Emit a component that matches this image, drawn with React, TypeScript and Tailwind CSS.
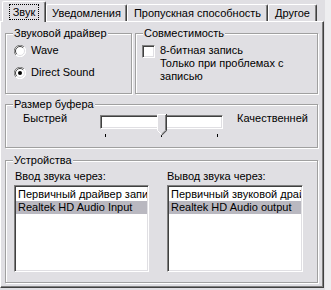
import React from "react";

const font = { fontFamily: '"Liberation Sans", Arial, sans-serif' };

function GroupBox({
  label,
  className,
  children,
}: {
  label: string;
  className: string;
  children?: React.ReactNode;
}) {
  return (
    <div
      className={
        "relative border border-[#a0a0a0] shadow-[inset_1px_1px_0_#ffffff,1px_1px_0_#ffffff] " +
        className
      }
    >
      <span className="absolute left-[7px] top-[-7px] bg-[#e0dfe3] px-[1px] leading-[13px] whitespace-nowrap">
        {label}
      </span>
      {children}
    </div>
  );
}

function Radio({ checked }: { checked?: boolean }) {
  return (
    <svg width="12" height="12" viewBox="0 0 12 12" className="shrink-0">
      <circle cx="6" cy="6" r="5.5" fill="#ffffff" />
      <path d="M10.1 1.9 A5.5 5.5 0 0 0 1.9 10.1" stroke="#808080" fill="none" />
      <path d="M1.9 10.1 A5.5 5.5 0 0 0 10.1 1.9" stroke="#ffffff" fill="none" />
      <path d="M9.2 2.8 A4.5 4.5 0 0 0 2.8 9.2" stroke="#404040" fill="none" />
      <path d="M2.8 9.2 A4.5 4.5 0 0 0 9.2 2.8" stroke="#e0dfe3" fill="none" />
      {checked && <circle cx="6" cy="6" r="2" fill="#000000" />}
    </svg>
  );
}

function Thumb() {
  return (
    <svg width="10" height="22" viewBox="0 0 10 22">
      <path d="M0 0 H10 V16.5 L5 21.5 L0 16.5 Z" fill="#e0dfe3" />
      <path d="M0.5 16.5 V0.5 H9" stroke="#ffffff" fill="none" />
      <path d="M9.5 0 V16.7 L4.8 21.4" stroke="#404040" fill="none" />
      <path d="M8.5 1 V16.3 L4.6 20.2" stroke="#808080" fill="none" />
      <path d="M0.6 16.6 L4.4 20.4" stroke="#ffffff" fill="none" />
    </svg>
  );
}

const sunken =
  "border border-t-[#808080] border-l-[#808080] border-r-white border-b-white shadow-[inset_1px_1px_0_#404040,inset_-1px_-1px_0_#e0dfe3]";

function ListBox({ items, w }: { items: string[]; w: string }) {
  return (
    <div className={"mt-[2px] h-[87px] bg-white p-[1px] pt-[2px] " + sunken + " " + w}>
      {items.map((t, i) => (
        <div
          key={i}
          className={
            "h-[13px] leading-[13px] pl-[2px] whitespace-nowrap overflow-hidden " +
            (i === 1 ? "bg-[#b9b8c0]" : "")
          }
        >
          {t}
        </div>
      ))}
    </div>
  );
}

function Tab({
  label,
  w,
  selected,
}: {
  label: string;
  w: string;
  selected?: boolean;
}) {
  return (
    <div
      className={
        "flex justify-center rounded-t-[2px] border-t border-l border-r border-t-white border-l-white border-r-[#404040] shadow-[inset_-1px_0_0_#808080] bg-[#e0dfe3] " +
        w +
        (selected ? " h-[21px] mb-[-1px] pt-[2px]" : " h-[17px] pt-[2px]")
      }
    >
      {selected ? (
        <span className="h-[16px] px-[3px] leading-[14px] border border-dotted border-black">
          {label}
        </span>
      ) : (
        <span className="leading-[13px]">{label}</span>
      )}
    </div>
  );
}

export default function App() {
  return (
    <div
      className="w-[331px] h-[290px] bg-[#eeeef0] text-[11px] text-black overflow-hidden"
      style={font}
    >
      <div className="w-[325px] h-[290px] bg-[#e0dfe3]">
        <div className="relative z-10 flex items-end h-[21px] pl-[2px]">
          <Tab label="Звук" w="w-[44px]" selected />
          <Tab label="Уведомления" w="w-[81px]" />
          <Tab label="Пропускная способность" w="w-[141px]" />
          <Tab label="Другое" w="w-[49px]" />
        </div>
        <div className="w-[324px] h-[267px] border-t border-l border-t-white border-l-white border-r border-b border-r-[#404040] border-b-[#404040] shadow-[inset_-1px_-1px_0_#808080]">
          <div className="flex mt-[11px] ml-[4px]">
            <GroupBox label="Звуковой драйвер" className="w-[127px] h-[61px]">
              <div className="flex flex-col pl-[8px] pt-[10px] gap-[9px]">
                <div className="flex items-center h-[13px] gap-[5px]">
                  <Radio />
                  <span className="leading-[13px]">Wave</span>
                </div>
                <div className="flex items-center h-[13px] gap-[5px]">
                  <Radio checked />
                  <span className="leading-[13px]">Direct Sound</span>
                </div>
              </div>
            </GroupBox>
            <GroupBox label="Совместимость" className="ml-[3px] w-[183px] h-[61px]">
              <div className="flex pl-[6px] pt-[10px] gap-[5px]">
                <div className={"mt-[1px] w-[13px] h-[13px] bg-white shrink-0 " + sunken} />
                <div className="flex flex-col leading-[13px] whitespace-nowrap">
                  <span>8-битная запись</span>
                  <span>Только при проблемах с</span>
                  <span>записью</span>
                </div>
              </div>
            </GroupBox>
          </div>
          <GroupBox label="Размер буфера" className="mt-[10px] ml-[4px] w-[313px] h-[44px]">
            <div className="flex items-start pl-[17px] pt-[10px]">
              <span className="w-[77px] mt-[-3px] leading-[13px]">Быстрей</span>
              <div className="relative w-[123px] h-[24px]">
                <div className={"h-[14px] bg-white " + sunken} />
                <div className="absolute left-[5px] top-[19px] w-[1px] h-[3px] bg-black" />
                <div className="absolute left-[61px] top-[19px] w-[1px] h-[3px] bg-black" />
                <div className="absolute left-[117px] top-[19px] w-[1px] h-[3px] bg-black" />
                <div className="absolute left-[57px] top-[-1px]">
                  <Thumb />
                </div>
              </div>
              <span className="ml-[14px] mt-[-3px] leading-[13px]">Качественней</span>
            </div>
          </GroupBox>
          <GroupBox label="Устройства" className="mt-[12px] ml-[4px] w-[313px] h-[123px]">
            <div className="flex pt-[9px] pl-[8px]">
              <div className="flex flex-col w-[135px]">
                <span className="pl-[1px] leading-[13px]">Ввод звука через:</span>
                <ListBox
                  w="w-[135px]"
                  items={["Первичный драйвер записи звука", "Realtek HD Audio Input"]}
                />
              </div>
              <div className="flex flex-col ml-[18px] w-[136px]">
                <span className="leading-[13px]">Вывод звука через:</span>
                <ListBox
                  w="w-[136px]"
                  items={["Первичный звуковой драйвер", "Realtek HD Audio output"]}
                />
              </div>
            </div>
          </GroupBox>
        </div>
      </div>
    </div>
  );
}
